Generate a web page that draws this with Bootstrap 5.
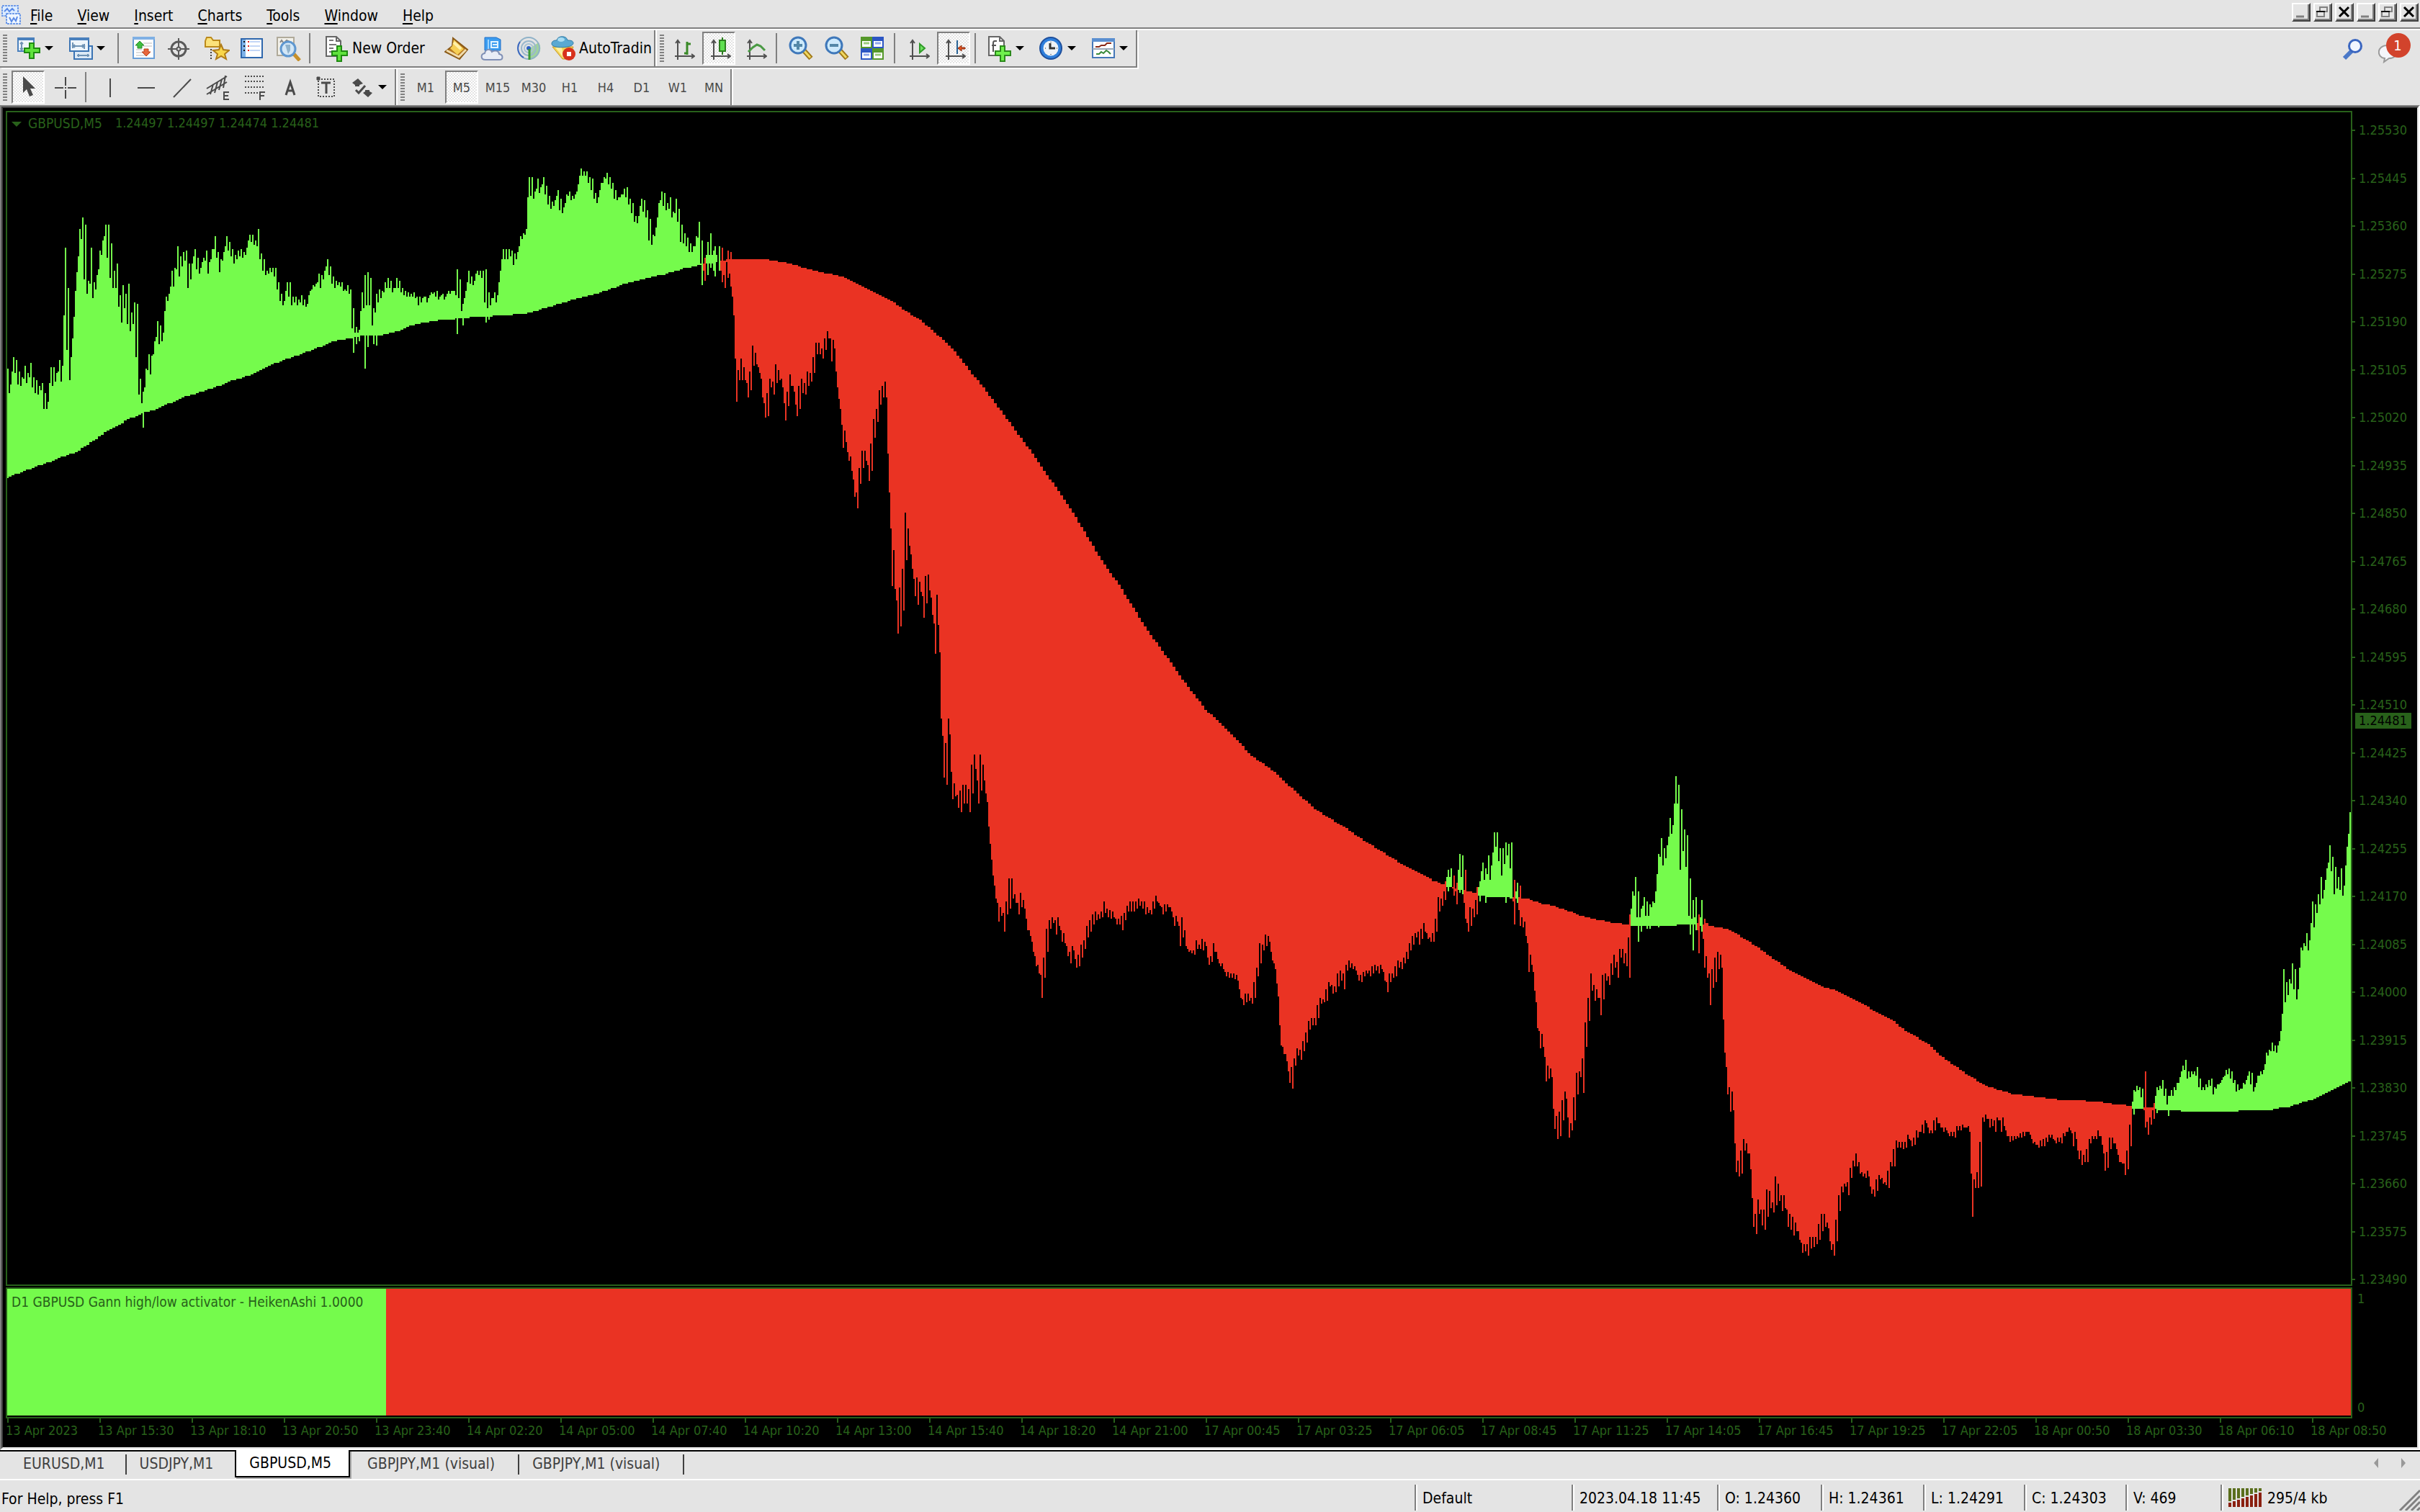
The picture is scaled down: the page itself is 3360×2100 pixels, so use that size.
<!DOCTYPE html>
<html lang="en">
<head>
<meta charset="utf-8">
<meta name="viewport" content="width=device-width, initial-scale=1">
<title>GBPUSD,M5</title>
<link href="https://cdn.jsdelivr.net/npm/bootstrap@5.3.0/dist/css/bootstrap.min.css" rel="stylesheet">
<script src="https://cdn.jsdelivr.net/npm/bootstrap@5.3.0/dist/js/bootstrap.bundle.min.js" defer></script>
<style>
:root{--face:#e4e4e4;--edge:#808080;--axis:#28611a;--up:#75fb4c;--down:#ea3323}
body{background:var(--face);color:#000;font-family:"DejaVu Sans Condensed","DejaVu Sans",Tahoma,sans-serif;font-size:21px;line-height:26px;overflow:hidden}
button{font:inherit;color:inherit;border:0;background:none;padding:0}
svg{display:block;flex:none}
/* menu */
.menubar{height:42px;border-bottom:2px solid #fff;box-shadow:inset 0 -2px 0 var(--edge);padding:0 2px 2px 0}
.menubar nav{gap:34px;padding-left:12px}
.menubar nav a{color:#000;text-decoration:none;line-height:26px;padding-top:6px}
.menubar u{text-decoration-thickness:2px;text-underline-offset:3px}
.winbtn{width:26px;height:26px;border:2px solid;border-color:#fff #404040 #404040 #fff;box-shadow:inset -2px -2px 0 var(--edge)}
/* toolbars */
.toolrow{height:54px}
.toolbox{height:52px;border-right:2px solid var(--edge);border-bottom:2px solid var(--edge);box-shadow:2px 2px 0 #fff;padding-left:4px}
.toolbox2{height:50px;padding-left:4px}
.grip{width:6px;height:38px;margin-right:3px;flex:none;background:repeating-linear-gradient(var(--edge) 0 2px,transparent 2px 4px)}
.toolbox2 .grip{margin-right:6px}
.tool{width:46px;height:46px;margin-right:4px;padding-left:10px;display:flex;align-items:center;flex:none}
.tool.drop{width:72px;margin-right:0}
.tool.drop::after{content:"";margin-left:5px;border:6px solid transparent;border-top-color:#000;border-bottom:0}
.tool.wide{width:164px;padding-left:12px;gap:5px;white-space:nowrap}
.tool.clip{width:151px;margin-right:0;gap:5px;padding-left:8px}
.tool.tf{padding:2px 0 0;justify-content:center;font-size:18px;color:#4a4a4a}
.tool.on{border:2px solid;border-color:var(--edge) #fff #fff var(--edge);padding-left:8px;background:repeating-conic-gradient(#fff 0 25%,#e4e4e4 0 50%) 0 0/4px 4px}
.tool.tf.on{padding:2px 0 0}
.split{width:2px;height:42px;background:var(--edge);margin:0 8px 0 6px;flex:none}
.split.tight{margin:0 6px 0 2px}
.barend{width:4px;align-self:stretch;border-left:2px solid var(--edge);border-right:2px solid #fff;margin-right:4px;flex:none}
.alerts{padding-right:8px;gap:20px}
/* chart window */
.chartwin{min-height:0;border-top:2px solid var(--edge);border-left:2px solid var(--edge);border-right:2px solid #fff;border-bottom:2px solid #fff}
.chartin{border:2px solid;border-color:#404040 #e4e4e4 #e4e4e4 #404040;background:#000;padding:4px 0 0 4px;color:var(--axis);font-size:18px;line-height:18px;display:grid;grid-template-columns:minmax(0,1fr) 90px;grid-template-rows:minmax(0,1fr) 182px 40px}
.plot{border:2px solid var(--axis);margin-bottom:2px;min-height:0}
.plot>svg{width:100%;height:100%;shape-rendering:crispEdges}
.caption1{left:29px;top:6px;gap:18px}
.caption1 span:first-of-type{font-size:19px}
.caption1::before{content:"";position:absolute;left:-23px;top:7px;border:7px solid transparent;border-top-color:var(--axis);border-bottom:0}
.prices{padding-top:18px;margin-bottom:2px}
.prices span{display:flex;align-items:center}
.prices span::before{content:"";width:4px;height:2px;background:var(--axis);margin-right:5px}
.lastprice{left:4px;width:78px;height:22px;line-height:22px;padding-left:5px;background:var(--axis);color:#000;top:51%;margin-top:4px}
.trend{border:2px solid var(--axis);padding-bottom:2px}
.trend .bull{background:var(--up);flex:526}
.trend .bear{background:var(--down);flex:2728}
.trend .caption2{left:6px;top:9px;white-space:nowrap;font-size:19px}
.scale2{padding:7px 0 6px 7px}
.times{grid-column:1/3;padding:0 18px 0 2px}
.times div{flex:1 1 0;min-width:0;white-space:nowrap;line-height:22px}
.times div::before{content:"";display:block;width:2px;height:6px;background:var(--axis)}
.times span{margin-left:-2px}
/* tabs and status */
.tabsbar{height:42px;border-bottom:2px solid #fff;background:linear-gradient(#000 0 2px,transparent 2px);padding-left:14px}
.charttab{height:40px;padding:0 30px 2px 18px;color:#404040;text-decoration:none;position:relative}
.charttab.long{padding-right:34px}
.charttab.bar::after{content:"";position:absolute;right:0;top:6px;width:2px;height:28px;background:#404040}
.charttab.cur{background:#fff;color:#000;height:38px;border:2px solid #000;border-top:0;padding:0 24px 0 18px;box-shadow:2px 2px 0 #a8a8a8;margin-right:6px}
.scrolls{gap:32px;padding-right:20px}
.statusbar{height:44px;padding:6px 0 2px 2px}
.pane{height:36px;border-left:2px solid var(--edge);box-shadow:inset 2px 0 0 #fff;padding:2px 0 0 9px;flex:none}
</style>
</head>
<body>
<div class="vh-100 d-flex flex-column">
  <header class="menubar d-flex align-items-center flex-shrink-0">
    <svg width="30" height="32" viewBox="0 0 30 32"><path d="M3 5h22v14H3z" fill="#dcecff" stroke="#6f9be8" stroke-width="2" stroke-dasharray="3 1"/><path d="M6 13l4-4 3 4 4-4 3 3" fill="none" stroke="#5a8ae6" stroke-width="2"/><path d="M9 16h19v14H9z" fill="#eef6ff" stroke="#6f9be8" stroke-width="2" stroke-dasharray="3 1"/><path d="M13 21l3 6 3-5 3 4 2-6" fill="none" stroke="#5a8ae6" stroke-width="2"/></svg>
    <nav class="d-flex flex-grow-1">
      <a href="#"><u>F</u>ile</a><a href="#"><u>V</u>iew</a><a href="#"><u>I</u>nsert</a><a href="#"><u>C</u>harts</a><a href="#"><u>T</u>ools</a><a href="#"><u>W</u>indow</a><a href="#"><u>H</u>elp</a>
    </nav>
    <div class="d-flex gap-1 pb-1" id="winbtns"></div>
  </header>

  <div class="toolrow d-flex justify-content-between flex-shrink-0">
    <div class="toolbox d-flex align-items-center">
      <span class="grip"></span>
      <button class="tool drop" aria-label="New chart"><svg width="34" height="34" viewBox="0 0 34 34"><path d="M2 3h22v18H2z" fill="#eef5fb" stroke="#4a80bd" stroke-width="2"/><path d="M1 2h24v4H1z" fill="#4a80bd"/><path d="M7 9v10M5 11l2-2 2 2M5 17l2 2 2-2M10 17h3" fill="none" stroke="#6f93b5" stroke-width="2"/><path d="M18 10h6v7h8v6h-8v8h-6v-8h-7v-6h7z" fill="#5fe23c" stroke="#1f8a12" stroke-width="2"/></svg></button>
      <button class="tool drop" aria-label="Profiles"><svg width="34" height="34" viewBox="0 0 34 34"><path d="M8 14h25v18H8z" fill="#dce9f6" stroke="#3b74b4" stroke-width="2"/><path d="M12 27h17M14 25v4M27 25v4" stroke="#6f93b5" stroke-width="2"/><path d="M2 3h26v18H2z" fill="#eef5fb" stroke="#3b74b4" stroke-width="2"/><path d="M1 2h28v4H1z" fill="#4a80bd"/><path d="M6 9v8M6 14h16M22 11v7M9 12l-3 2 3 2M19 12l3 2-3 2" fill="none" stroke="#6f93b5" stroke-width="2"/></svg></button>
      <span class="split"></span>
      <button class="tool" aria-label="Market Watch"><svg width="34" height="34" viewBox="0 0 34 34"><path d="M2 3h29v28H2z" fill="#fff" stroke="#6a9fd8" stroke-width="2"/><path d="M1 1h31v4H1z" fill="#7fb0e4"/><path d="M16 10h12M16 14h12M6 19h8M6 23h9M6 27h12" stroke="#dcdcdc" stroke-width="2"/><path d="M11 7l6 6h-3v4H8v-4H5z" fill="#3fbf3f" stroke="#2c8a2c"/><path d="M20 28l6-6h-3v-4h-6v4h-3z" fill="#e8673c" stroke="#b8441c"/></svg></button>
      <button class="tool" aria-label="Data Window"><svg width="32" height="34" viewBox="0 0 32 34" fill="none" stroke="#5a5a5a" stroke-width="3"><circle cx="15" cy="18" r="10"/><path d="M15 3v30M0 18h30" stroke-width="2"/><circle cx="15" cy="18" r="2.500" fill="#e4e4e4" stroke-width="2"/></svg></button>
      <button class="tool" aria-label="Navigator"><svg width="36" height="34" viewBox="0 0 36 34"><path d="M2 7l2-5h6l3 4h9v9H2z" fill="#fbe27a" stroke="#bb8a1c" stroke-width="2"/><path d="M10 18v14" stroke="#444" stroke-width="2" stroke-dasharray="2 2"/><path d="M24 12l3 7 8 1-6 5 2 7-7-4-7 4 2-7-6-5 8-1z" fill="#f8d64a" stroke="#b07c18" stroke-width="2"/></svg></button>
      <button class="tool" aria-label="Terminal"><svg width="34" height="34" viewBox="0 0 34 34"><path d="M2 4h29v26H2z" fill="#fff" stroke="#2f67ad" stroke-width="2"/><path d="M3 5h5v24H3z" fill="#7fb3ea"/><path d="M14 8h14M14 14h14M14 20h14" stroke="#c3d6f6" stroke-width="2"/><path d="M6 7v16" stroke="#111" stroke-width="2" stroke-dasharray="2 4"/><path d="M12 7v16" stroke="#e02020" stroke-width="2" stroke-dasharray="2 4"/></svg></button>
      <button class="tool" aria-label="Strategy Tester"><svg width="36" height="36" viewBox="0 0 36 36"><path d="M2 3h23v25H2z" fill="#f3f1ea" stroke="#b0aa9a" stroke-width="2"/><path d="M6 10l2-3 3 4 4-4 6 3" fill="none" stroke="#888" stroke-width="2"/><path d="M25 26l8 9" stroke="#c7902a" stroke-width="5"/><circle cx="17" cy="19" r="10" fill="#cfe6f8" fill-opacity=".9" stroke="#5f97d0" stroke-width="3"/><path d="M13 13h7v8l-3 5z" fill="#8fb2cc"/></svg></button>
      <span class="split"></span>
      <button class="tool wide"><svg width="33" height="38" viewBox="0 0 33 38"><path d="M2 3h14l6 6v21H2z" fill="#fdfdfd" stroke="#666" stroke-width="2"/><path d="M16 3v6h6" fill="none" stroke="#666" stroke-width="2"/><path d="M6 8h6M6 14h10M6 19h6M6 24h5" stroke="#777" stroke-width="2"/><path d="M17 16h6v7h8v6h-8v8h-6v-8h-7v-6h7z" fill="#5fe23c" stroke="#1f8a12" stroke-width="2"/></svg>New Order</button>
      <button class="tool" aria-label="MetaEditor"><svg width="34" height="34" viewBox="0 0 34 34"><path d="M12 3l20 16-11 13L1 22l10-8z" fill="#b87a22" stroke="#8a5a18" stroke-width="2"/><path d="M13 5l14 13-9 8L8 17l3-3z" fill="#f6cf55"/><path d="M13 9l10 9" stroke="#fff0a8" stroke-width="4"/><path d="M3 20l17 9 10-10" fill="none" stroke="#f0dcae" stroke-width="3"/></svg></button>
      <button class="tool" aria-label="Virtual Hosting"><svg width="34" height="34" viewBox="0 0 34 34"><path d="M6 2h16l6 3v15H6z" fill="#3b9cf0" stroke="#1f6fc8"/><path d="M11 5v14" stroke="#9cd4ff" stroke-width="2"/><path d="M15 8h9v8h-9z" fill="none" stroke="#dff2ff" stroke-width="2"/><path d="M17 12h6" stroke="#dff2ff" stroke-width="2"/><path d="M7 33c-7 0-7-8-1-9 1-6 8-7 10-2 5-3 10-1 10 3 6 1 6 8 0 8z" fill="#e9edf6" stroke="#7f8fb5" stroke-width="2"/></svg></button>
      <button class="tool" aria-label="Signals"><svg width="34" height="34" viewBox="0 0 34 34" fill="none"><path d="M17 18L31 9a16 16 0 0 1-14 24z" fill="#8fce8a" opacity=".8"/><circle cx="17" cy="17" r="15" stroke="#8fb2c8" stroke-width="2"/><circle cx="17" cy="17" r="10" stroke="#9ab8cc" stroke-width="2"/><circle cx="17" cy="17" r="6" stroke="#a8c2d4" stroke-width="2"/><path d="M10 30A15 15 0 0 1 5 8" stroke="#3d68c0" stroke-width="2"/><circle cx="17" cy="17" r="3" fill="#2d61c4"/><path d="M18 18v15" stroke="#3a9a35" stroke-width="3"/></svg></button>
      <button class="tool wide clip"><svg width="34" height="36" viewBox="0 0 34 36"><path d="M2 16h29l-7 17h-8z" fill="#f2d355" stroke="#c69a25"/><path d="M6 17l12 15-3-15z" fill="#fdf0a0"/><path d="M1 12c0-5 5-5 7-5 1-7 14-7 15 0 3 0 8 0 8 4 0 7-30 8-30 1z" fill="#5aa9d2" stroke="#2f7ba6"/><ellipse cx="14" cy="6" rx="5" ry="3" fill="#a8dcf2"/><circle cx="25" cy="26" r="9" fill="#d8321c"/><path d="M22 23h6v6h-6z" fill="#fff"/></svg>AutoTradin</button>
      <span class="barend"></span><span class="grip"></span>
      <button class="tool" aria-label="Bar chart"><svg width="30" height="34" viewBox="0 0 30 34" fill="none" stroke="#505050" stroke-width="2"><path d="M6 6v27M2 28h27M3 10l3-4 3 4M25 25l4 3-4 3"/><path d="M19 8v18M19 11h5M15 24h4" stroke="#3a8a28" stroke-width="3"/></svg></button>
      <button class="tool on" aria-label="Candlesticks"><svg width="30" height="34" viewBox="0 0 30 34" fill="none" stroke="#505050" stroke-width="2"><path d="M6 6v27M2 28h27M3 10l3-4 3 4M25 25l4 3-4 3"/><path d="M18 2v24" stroke="#2c7f1e"/><path d="M14 6h8v15h-8z" fill="#5fe050" stroke="#2c7f1e"/></svg></button>
      <button class="tool" aria-label="Line chart"><svg width="30" height="34" viewBox="0 0 30 34" fill="none" stroke="#505050" stroke-width="2"><path d="M6 6v27M2 28h27M3 10l3-4 3 4M25 25l4 3-4 3"/><path d="M4 22l6-6 6-4 5 2 6 6" stroke="#4a9a44" stroke-width="3"/></svg></button>
      <span class="split tight"></span>
      <button class="tool" aria-label="Zoom in"><svg width="34" height="34" viewBox="0 0 34 34"><path d="M21 20l10 11" stroke="#a07818" stroke-width="7"/><path d="M21 20l9 10" stroke="#f0d860" stroke-width="3"/><circle cx="13" cy="13" r="11" fill="#cdeafc" stroke="#3f78ba" stroke-width="3"/><path d="M13 7v12M7 13h12" stroke="#5488a8" stroke-width="4"/></svg></button>
      <button class="tool" aria-label="Zoom out"><svg width="34" height="34" viewBox="0 0 34 34"><path d="M21 20l10 11" stroke="#a07818" stroke-width="7"/><path d="M21 20l9 10" stroke="#f0d860" stroke-width="3"/><circle cx="13" cy="13" r="11" fill="#cdeafc" stroke="#3f78ba" stroke-width="3"/><path d="M7 13h12" stroke="#5488a8" stroke-width="4"/></svg></button>
      <button class="tool" aria-label="Tile windows"><svg width="32" height="32" viewBox="0 0 32 32"><path d="M0 0h16v16H0z" fill="#55982a"/><path d="M16 0h16v16H16z" fill="#2c56c4"/><path d="M0 16h16v16H0z" fill="#2c56c4"/><path d="M16 16h16v16H16z" fill="#55982a"/><path d="M2 6h12v8H2zM18 6h12v8H18zM2 22h12v8H2zM18 22h12v8H18z" fill="#fff"/><path d="M4 9h8M20 25h8" stroke="#9ccb7c" stroke-width="3"/><path d="M20 9h8M4 25h8" stroke="#90a8ec" stroke-width="3"/></svg></button>
      <span class="split"></span>
      <button class="tool" aria-label="Auto scroll"><svg width="30" height="34" viewBox="0 0 30 34" fill="none" stroke="#505050" stroke-width="2"><path d="M6 6v27M2 28h27M3 10l3-4 3 4M25 25l4 3-4 3"/><path d="M16 11l7 6-7 6z" fill="#6fe060" stroke="#2f9a28"/></svg></button>
      <button class="tool on" aria-label="Chart shift"><svg width="30" height="34" viewBox="0 0 30 34" fill="none" stroke="#505050" stroke-width="2"><path d="M6 6v27M2 28h27M3 10l3-4 3 4M25 25l4 3-4 3"/><path d="M18 6v19" stroke="#2a6496"/><path d="M19 17l5-4v3h5v2h-5v3z" fill="#e0501c" stroke="#8a2c10" stroke-width="1"/></svg></button>
      <span class="split tight"></span>
      <button class="tool drop" aria-label="Indicators"><svg width="34" height="38" viewBox="0 0 34 38"><path d="M2 3h15l6 6v20H2z" fill="#fdfdfd" stroke="#666" stroke-width="2"/><path d="M17 3v6h6" fill="none" stroke="#666" stroke-width="2"/><path d="M13 9h-3q-2 0-2 3v12M6 15h6" fill="none" stroke="#555" stroke-width="2"/><path d="M18 16h6v7h8v6h-8v8h-6v-8h-7v-6h7z" fill="#6ff04c" stroke="#2c8a1c" stroke-width="2"/></svg></button>
      <button class="tool drop" aria-label="Periods"><svg width="34" height="34" viewBox="0 0 34 34"><circle cx="16" cy="17" r="15" fill="#2f7fdc" stroke="#1f4f9c" stroke-width="2"/><circle cx="16" cy="17" r="10.500" fill="#eef2f6"/><path d="M15 10v7h7" fill="none" stroke="#333" stroke-width="3"/><path d="M16 8v1M16 25v1M8 17h1M24 17h1" stroke="#888" stroke-width="2"/></svg></button>
      <button class="tool drop" aria-label="Templates"><svg width="34" height="34" viewBox="0 0 34 34"><path d="M2 4h30v26H2z" fill="#fff" stroke="#4478b8" stroke-width="2"/><path d="M1 3h32v5H1z" fill="#5a8fd0"/><path d="M2 18h30" stroke="#9aa8b8" stroke-width="2"/><path d="M6 15h5l3-2h5l3-3h6" fill="none" stroke="#8a2a18" stroke-width="2"/><path d="M7 25h4l3-3 3 2 4-4 3 2 3 3" fill="none" stroke="#3a8a3a" stroke-width="2"/></svg></button>
    </div>
    <div class="alerts d-flex align-items-start pt-1">
      <button class="pt-1" aria-label="Search"><svg width="30" height="34" viewBox="0 0 30 34"><path d="M3 31l10-10" stroke="#4a78c8" stroke-width="6"/><circle cx="18" cy="14" r="8.500" fill="#f2f6ff" stroke="#3a66c0" stroke-width="3"/></svg></button>
      <button aria-label="Notifications"><svg width="50" height="42" viewBox="0 0 50 42"><path d="M13 17c-16 0-15 17-4 18l-1 5 7-5c14 0 16-18-2-18z" fill="#f4f5fa" stroke="#9a9a9a" stroke-width="2"/><circle cx="28" cy="17" r="17" fill="#d2432c"/><text x="27" y="24" fill="#fff" font-size="20" text-anchor="middle">1</text></svg></button>
    </div>
  </div>

  <div class="toolbox2 d-flex align-items-center flex-shrink-0">
    <span class="grip"></span>
    <button class="tool on" aria-label="Cursor"><svg width="30" height="34" viewBox="0 0 30 34"><path d="M6 2v23l5-5 4 10 5-2-4-9h7z" fill="#4a4a4a"/></svg></button>
    <button class="tool" aria-label="Crosshair"><svg width="32" height="34" viewBox="0 0 32 34" stroke="#4a4a4a" stroke-width="2"><path d="M15 3v12M15 21v12M0 18h12M18 18h12M14 18h2"/></svg></button>
    <span class="split tight"></span>
    <button class="tool" aria-label="Vertical line"><svg width="32" height="34" viewBox="0 0 32 34"><path d="M17 5v26" stroke="#4a4a4a" stroke-width="2"/></svg></button>
    <button class="tool" aria-label="Horizontal line"><svg width="32" height="34" viewBox="0 0 32 34"><path d="M5 18h24" stroke="#4a4a4a" stroke-width="2"/></svg></button>
    <button class="tool" aria-label="Trendline"><svg width="32" height="34" viewBox="0 0 32 34"><path d="M5 31L29 6" stroke="#4a4a4a" stroke-width="2"/></svg></button>
    <button class="tool" aria-label="Equidistant channel"><svg width="34" height="38" viewBox="0 0 34 38" fill="none" stroke="#4a4a4a" stroke-width="2"><path d="M1 21L29 4M1 29l28-17M6 29l4-14M12 27l4-15M18 23l4-15M24 20l3-17"/><path d="M32 26h-7v10h7M25 31h6"/></svg></button>
    <button class="tool" aria-label="Fibonacci retracement"><svg width="34" height="38" viewBox="0 0 34 38" fill="none" stroke="#4a4a4a" stroke-width="2"><path d="M4 4h26M4 11h26M4 19h26M4 27h18" stroke-dasharray="2 2"/><path d="M32 26h-7v11M25 31h6"/></svg></button>
    <button class="tool" aria-label="Text"><svg width="32" height="34" viewBox="0 0 32 34" fill="none" stroke="#4a4a4a" stroke-width="3"><path d="M11 28l6-18 6 18M13 22h8"/></svg></button>
    <button class="tool" aria-label="Text label"><svg width="32" height="34" viewBox="0 0 32 34" fill="none" stroke="#4a4a4a"><path d="M6 6h22v24H6z" stroke-width="2" stroke-dasharray="2 2"/><path d="M4 3h4v4H4z" fill="#4a4a4a"/><path d="M10 11h13M17 11v15" stroke-width="3"/></svg></button>
    <button class="tool drop" aria-label="Arrows"><svg width="34" height="34" viewBox="0 0 34 34"><path d="M11 5l7 7-5 2v2H7v-2l-4-3zM25 31l-7-6 3-2v-2h6v2l4 2z" fill="#4a4a4a"/><path d="M8 21l4 4 9-10" fill="none" stroke="#4a4a4a" stroke-width="3"/></svg></button>
    <span class="barend"></span><span class="grip"></span>
    <button class="tool tf">M1</button><button class="tool tf on">M5</button><button class="tool tf">M15</button><button class="tool tf">M30</button><button class="tool tf">H1</button><button class="tool tf">H4</button><button class="tool tf">D1</button><button class="tool tf">W1</button><button class="tool tf me-0">MN</button>
    <span class="barend"></span>
  </div>

  <main class="chartwin d-flex flex-column flex-grow-1">
    <div class="chartin flex-grow-1">
      <div class="plot position-relative">
        <svg viewBox="10 156 3254 1628" preserveAspectRatio="none" id="plot"></svg>
        <div class="caption1 position-absolute d-flex"><span>GBPUSD,M5</span><span>1.24497 1.24497 1.24474 1.24481</span></div>
      </div>
      <div class="prices position-relative d-flex flex-column justify-content-between" id="prices"><div class="lastprice position-absolute">1.24481</div></div>
      <div class="trend position-relative d-flex"><div class="bull"></div><div class="bear"></div><div class="caption2 position-absolute">D1 GBPUSD Gann high/low activator - HeikenAshi 1.0000</div></div>
      <div class="scale2 d-flex flex-column justify-content-between"><div>1</div><div>0</div></div>
      <div class="times d-flex" id="times"></div>
    </div>
  </main>

  <div class="tabsbar d-flex align-items-start flex-shrink-0">
    <a class="charttab bar d-flex align-items-center" href="#">EURUSD,M1</a>
    <a class="charttab d-flex align-items-center" href="#">USDJPY,M1</a>
    <a class="charttab cur d-flex align-items-center" href="#">GBPUSD,M5</a>
    <a class="charttab bar long d-flex align-items-center" href="#">GBPJPY,M1 (visual)</a>
    <a class="charttab bar long d-flex align-items-center" href="#">GBPJPY,M1 (visual)</a>
    <div class="scrolls d-flex align-self-center ms-auto pb-1"><svg width="6" height="14" viewBox="0 0 6 14"><path d="M6 0v14L0 7z" fill="#999"/></svg><svg width="6" height="14" viewBox="0 0 6 14"><path d="M0 0v14l6-7z" fill="#999"/></svg></div>
  </div>
  <footer class="statusbar position-relative d-flex align-items-center flex-shrink-0" id="status"><div class="flex-grow-1 pt-1">For Help, press F1</div></footer>
</div>

<script>
const el = (tag, text, cls) => { const n = document.createElement(tag); if (text) n.textContent = text; if (cls) n.className = cls; return n; };

// window controls, once for the program and once for the chart
const glyphs = {
  Minimize: '<path d="M4 17h11" stroke="#808080" stroke-width="3"/>',
  Restore: '<path d="M7 9V4h10v6h-4" fill="none" stroke="#808080" stroke-width="2"/><path d="M3 10h10v7H3z" fill="none" stroke="#808080" stroke-width="2"/><path d="M2 10h12" stroke="#111" stroke-width="2"/>',
  Close: '<path d="M4 4l13 13M17 4L4 17" stroke="#000" stroke-width="3"/>'
};
for (let i = 0; i < 2; i++) for (const k in glyphs) {
  const b = el('button', '', 'winbtn'); b.setAttribute('aria-label', k);
  b.innerHTML = '<svg width="22" height="22" viewBox="0 0 22 22">' + glyphs[k] + '</svg>';
  document.getElementById('winbtns').append(b);
}

// price scale
for (let i = 0; i < 25; i++) document.getElementById('prices').append(el('span', (1.2553 - i * 0.00085).toFixed(5)));

// time scale
'13 Apr 2023,13 Apr 15:30,13 Apr 18:10,13 Apr 20:50,13 Apr 23:40,14 Apr 02:20,14 Apr 05:00,14 Apr 07:40,14 Apr 10:20,14 Apr 13:00,14 Apr 15:40,14 Apr 18:20,14 Apr 21:00,17 Apr 00:45,17 Apr 03:25,17 Apr 06:05,17 Apr 08:45,17 Apr 11:25,17 Apr 14:05,17 Apr 16:45,17 Apr 19:25,17 Apr 22:05,18 Apr 00:50,18 Apr 03:30,18 Apr 06:10,18 Apr 08:50'
  .split(',').forEach(t => { const d = el('div'); d.append(el('span', t)); document.getElementById('times').append(d); });

// status panes
[['Default',218],['2023.04.18 11:45',202],['O: 1.24360',144],['H: 1.24361',142],['L: 1.24291',140],['C: 1.24303',141],['V: 469',132],['295/4 kb',277]].forEach(([t, w], i) => {
  const p = el('div', i < 7 ? t : '', 'pane d-flex align-items-center'); p.style.width = w + 'px';
  if (i === 7) {
    let s = '<svg class="me-2" width="46" height="28" viewBox="0 0 46 28">';
    for (let k = 0; k < 8; k++) { const h = 6 + 2 * k; s += `<path d="M${k * 6} 0h4v${24 - h}h-4z" fill="#5a6e1c"/><path d="M${k * 6} ${26 - h}h4v${h}h-4z" fill="#8a2010"/>`; }
    p.innerHTML = s + '</svg>' + t + '<svg class="ms-auto align-self-end" width="30" height="30" viewBox="0 0 30 30" stroke="#808080" stroke-width="3"><path d="M2 30L30 2M10 30L30 10M18 30L30 18M26 30l4-4"/></svg>';
  }
  document.getElementById('status').append(p);
});

// history frames: origin and scale of each recorded stretch
const A = [0, 220, 1.452, 3], B = [960, 320, 1.96, 1.4], C = [1700, 1000, 1.96, 1.96], D = [2440, 1080, 1.823, 2.24];
const pts = (f, s) => s.trim().split(/\s+/).map(p => { const [x, y] = p.split(',').map(Number); return [f[0] + x / f[2], f[1] + y / f[3]]; });
const even = v => Math.round(v / 2) * 2;
function at(list, x, exact) {
  let i = 1; while (i < list.length - 1 && list[i][0] < x) i++;
  const [a, b] = [list[i - 1], list[i]];
  if (exact) { if (Math.abs(a[0] - x) < 1.1) return a[1]; if (Math.abs(b[0] - x) < 1.1) return b[1]; }
  const t = Math.min(1, Math.max(0, (x - a[0]) / (b[0] - a[0])));
  return a[1] + (b[1] - a[1]) * t;
}
const paths = { up: '', down: '' };
const bar = (k, x, y1, y2) => { y1 = even(y1); y2 = even(y2); paths[k] += `M${x} ${y1}h2V${y2}h-2z`; };
function fill(k, x0, x1, ma, px) {
  for (let x = even(x0); x < x1; x += 2) {
    const m = at(ma, Math.floor(x / 4) * 4 + 2), p = at(px, x + 1, true);
    bar(k, x, Math.min(m, p), Math.max(m, p));
  }
}
const ticks = (k, f, s) => s.trim().split(/\s+/).forEach(p => { const [x, a, b] = p.split(',').map(Number); bar(k, even(f[0] + x / f[2] - 1), f[1] + a / f[3], f[1] + b / f[3]); });

fill('up', 10, 976, pts(A, '15,1330 45,1305 75,1283 105,1262 135,1236 155,1224 165,1206 185,1182 205,1152 225,1124 245,1103 265,1082 290,1060 315,1045 345,1018 375,992 410,971 445,945 475,921 505,903 535,870 570,842 605,817 640,790 665,768 690,755 712,750 715,742 765,737 800,722 820,702 850,686 880,676 920,668 960,660 990,658 1000,654 1030,652 1060,645 1080,636 1100,622 1130,605 1170,580 1215,556 1260,522 1300,500 1340,483 1380,458 1415,444'),
pts(A, `15,876 18,980 21,940 24,888 27,830 30,892 33,840 36,940 39,888 42,946 45,912 48,920 51,865 54,935 57,893 60,910 63,852 66,952 68,912 71,976 74,924 77,982 80,948 82,965 85,936 88,1044 91,978 94,1044 97,1012 100,936 103,870 106,946 109,870 112,930 115,894 118,888 121,840 124,930 126,862 129,655 132,372 135,798 137,540 140,922 143,828 146,750 149,660 152,552 155,474 158,408 161,295 164,335 167,246 169,502 172,276 175,562 178,510 182,520 184,372 187,580 190,516 193,545 195,486 198,460 201,384 204,402 207,342 210,324 213,276 216,412 219,276 221,500 224,354 227,540 230,468 233,540 236,438 239,618 242,570 245,684 248,528 251,622 254,564 257,690 259,522 262,718 265,640 268,690 271,600 274,828 277,606 280,982 283,918 286,1020 289,972 291,954 294,876 297,880 300,816 303,900 306,822 309,816 312,762 315,744 318,678 321,774 324,696 326,762 329,726 332,636 335,576 338,594 341,564 344,534 347,468 350,534 352,456 355,462 358,366 361,492 364,408 367,450 370,390 373,426 376,384 379,540 382,438 385,504 388,436 393,378 396,462 399,414 402,480 405,456 410,414 413,426 416,384 419,480 422,432 425,420 428,378 431,378 434,324 437,416 439,390 442,474 445,420 448,425 452,390 454,366 457,324 460,384 463,348 465,408 468,378 471,438 474,402 477,420 480,384 483,408 486,378 489,414 492,390 495,402 498,372 500,342 503,318 506,348 509,318 512,360 515,342 518,366 521,295 524,420 527,396 530,468 532,420 535,486 538,468 541,480 544,456 547,474 550,456 553,492 556,456 559,546 562,516 565,594 568,564 571,612 573,594 576,552 579,516 582,576 585,516 588,612 591,576 594,600 597,576 600,612 602,588 605,600 608,570 611,612 614,588 617,618 620,606 622,570 625,552 628,546 631,528 634,534 637,522 640,516 643,480 646,540 649,486 652,504 655,468 658,450 660,420 663,486 666,450 669,522 672,492 675,540 678,510 681,528 684,516 687,534 690,516 693,552 696,546 699,552 702,528 705,564 708,546 710,708 712,625 715,725 718,702 721,726 724,714 727,636 730,558 733,624 737,486 739,612 741,474 744,612 747,498 750,695 753,625 756,642 760,564 762,600 765,546 768,582 771,552 774,558 777,516 780,540 782,498 785,540 788,510 791,558 794,540 797,540 799,498 802,540 805,510 808,558 811,540 814,570 817,552 820,576 823,558 826,576 829,564 832,576 835,558 838,582 841,576 844,612 846,576 849,600 852,582 858,576 861,600 864,582 870,558 873,564 876,558 879,576 881,552 884,588 887,576 893,564 896,588 899,576 904,552 907,564 910,552 915,552 917,534 919,570 921,462 924,582 928,504 931,635 934,606 937,580 940,552 943,516 945,468 948,522 951,492 954,528 957,510 960,480 963,468 966,486 969,468 971,498 974,468 977,600 980,462 983,624 986,558 989,612 992,582 995,582 998,558 1001,600 1004,570 1006,516 1008,468 1011,420 1014,378 1017,420 1020,378 1023,420 1026,378 1029,408 1032,384 1035,444 1038,396 1041,420 1044,390 1047,366 1049,324 1052,336 1055,312 1058,318 1061,295 1064,160 1067,78 1070,156 1072,78 1075,168 1078,138 1081,126 1084,84 1087,144 1090,120 1093,108 1096,78 1099,150 1102,114 1105,192 1108,156 1110,210 1113,180 1116,198 1119,174 1122,156 1125,132 1128,216 1131,168 1133,228 1136,204 1139,186 1142,150 1145,156 1148,138 1151,174 1154,156 1157,168 1160,150 1163,138 1166,108 1168,72 1171,42 1174,72 1177,54 1180,72 1183,54 1186,102 1188,78 1191,132 1194,84 1197,168 1200,144 1203,186 1206,162 1209,132 1212,102 1215,102 1218,78 1220,84 1223,60 1226,108 1229,78 1232,126 1235,102 1238,168 1241,132 1244,174 1247,162 1250,162 1253,150 1256,150 1259,126 1262,162 1264,120 1267,192 1270,168 1273,228 1276,186 1279,264 1282,240 1285,270 1288,240 1290,198 1293,168 1296,222 1299,174 1302,246 1305,216 1308,342 1310,252 1313,360 1316,318 1319,324 1322,288 1325,246 1328,186 1331,174 1334,138 1337,198 1340,144 1343,216 1346,186 1349,210 1351,162 1354,246 1357,222 1360,228 1363,168 1366,264 1369,210 1372,348 1374,276 1377,354 1380,312 1383,366 1386,330 1389,390 1392,354 1395,390 1398,366 1401,366 1403,324 1406,330 1409,264 1412,438 1415,342 1417,438`));
ticks('up', A, '289,1040,1122 712,740,810 718,740,775 724,740,762 737,730,876 741,730,786 753,730,774 759,730,780 921,660,732 933,655,696 980,650,684 986,650,672 1415,342,528 1424,402,440 1427,348,486 1430,402,438 1433,312,456 1435,400,438 1438,384,468 1441,405,432 1443,366,492 1446,402,432 1450,366,468');
ticks('down', A, '1418,440,468 1421,414,510 1453,428,468 1456,372,516 1459,428,486 1462,428,540 1465,420,432 1467,384,498 1470,420,480 1473,390,534');

fill('down', 1015, 1760, pts(B, '108,56 200,56 235,60 270,64 310,74 345,80 385,86 420,92 460,106 500,121 545,136 580,155 630,178 665,200 695,218 720,238 760,275 800,310 840,348 880,387 920,425 960,467 1000,507 1040,550 1080,598 1120,645 1160,685 1200,730 1240,777 1280,815 1320,856 1360,895 1400,932 1440,958 1480,987 1520,1018 1545,1033 1568,1042'),
pts(B, `108,107 112,130 115,165 119,250 123,333 127,272 131,290 135,250 139,290 143,266 147,290 151,298 155,325 159,275 163,310 167,224 170,262 174,238 180,260 190,288 195,325 198,335 202,364 206,316 210,360 214,287 218,305 221,294 225,318 229,260 233,296 237,272 241,290 245,288 249,305 253,335 257,370 261,314 265,342 269,280 273,303 277,302 280,314 284,338 288,360 292,302 296,347 300,287 304,316 308,297 312,318 316,275 320,302 323,277 327,293 331,247 335,277 339,218 343,240 347,218 351,240 355,230 359,250 363,210 366,232 370,196 374,210 378,210 382,254 386,213 390,230 394,275 398,305 402,328 406,347 410,378 414,422 418,390 422,412 426,430 430,447 434,440 438,468 442,484 445,517 449,510 453,540 457,462 461,492 465,428 468,462 472,428 476,448 480,456 484,487 488,414 492,468 496,367 500,402 504,347 508,371 512,310 516,338 520,302 523,325 528,294 532,325 535,434 540,510 543,580 547,692 551,622 555,697 559,720 563,784 566,694 570,770 574,658 578,740 582,550 586,640 590,580 594,613 598,630 602,658 606,678 610,710 613,675 617,728 621,683 625,703 629,710 633,752 637,672 641,725 645,670 649,700 653,714 657,748 661,765 664,823 668,708 672,767 676,820 680,948 684,982 688,1064 692,997 696,1078 700,950 704,980 708,1052 712,1106 716,1075 720,1100 724,1098 727,1123 731,1090 735,1131 739,1078 743,1114 747,1078 751,1114 755,1086 759,1131 762,1040 766,1095 770,1019 774,1047 778,1070 782,1114 786,1020 790,1088 794,1040 798,1070 802,1095 806,1112 810,1160 814,1193 818,1224 822,1254 826,1274 830,1300 834,1308 837,1344 841,1316 845,1333 849,1328 853,1364 857,1305 860,1330 864,1260 868,1319 872,1260 876,1299 880,1291 884,1308 888,1308 892,1330 896,1288 900,1315 904,1302 908,1319 912,1338 916,1360 920,1361 924,1372 928,1383 932,1403 936,1411 939,1431 943,1428 947,1445 951,1448 955,1492 958,1414 962,1453 966,1358 970,1403 974,1341 978,1358 982,1336 986,1347 990,1341 994,1369 998,1336 1002,1352 1006,1361 1009,1383 1013,1366 1017,1386 1021,1392 1025,1411 1029,1403 1033,1425 1037,1392 1041,1400 1045,1417 1049,1434 1053,1408 1056,1431 1060,1389 1064,1414 1068,1380 1072,1397 1076,1352 1080,1375 1084,1341 1088,1364 1092,1330 1096,1350 1100,1324 1104,1341 1108,1330 1111,1338 1115,1324 1119,1336 1123,1305 1127,1327 1131,1319 1135,1336 1139,1322 1143,1338 1147,1324 1151,1336 1155,1338 1158,1350 1162,1338 1166,1350 1170,1333 1174,1361 1178,1327 1182,1341 1186,1313 1190,1324 1194,1305 1198,1324 1202,1305 1206,1324 1209,1305 1213,1319 1217,1299 1221,1313 1225,1305 1229,1319 1233,1305 1237,1330 1241,1316 1245,1327 1249,1322 1252,1330 1256,1305 1260,1319 1264,1294 1268,1305 1272,1308 1276,1313 1280,1316 1284,1330 1288,1310 1292,1324 1296,1310 1300,1315 1304,1316 1307,1325 1311,1336 1315,1352 1319,1333 1323,1344 1327,1352 1331,1392 1335,1336 1339,1375 1343,1361 1347,1392 1351,1397 1354,1403 1358,1400 1362,1406 1366,1400 1370,1408 1374,1380 1378,1397 1382,1389 1386,1397 1390,1378 1394,1400 1398,1383 1402,1392 1405,1414 1409,1428 1413,1411 1417,1422 1421,1386 1425,1403 1429,1403 1433,1417 1437,1425 1441,1431 1445,1425 1449,1436 1456,1450 1460,1442 1464,1453 1468,1445 1472,1453 1476,1445 1480,1456 1484,1448 1488,1459 1492,1476 1496,1492 1499,1495 1502,1506 1507,1484 1511,1501 1515,1484 1519,1498 1523,1492 1527,1504 1531,1462 1535,1492 1539,1434 1542,1450 1546,1386 1550,1425 1554,1389 1558,1400 1562,1369 1566,1392`));

fill('down', 1760, 2008, pts(C, '117,128 150,152 180,182 215,214 250,244 290,270 330,293 375,325 420,353 460,377 490,397 530,417 570,438 590,446 604,448'),
pts(C, `112,585 116,614 120,588 124,603 128,631 132,655 136,662 140,678 143,717 147,753 151,831 155,886 159,890 163,909 167,909 171,929 174,956 178,988 182,945 186,1003 190,921 194,941 198,894 202,913 206,898 210,925 214,874 218,902 221,851 225,878 229,819 233,843 237,811 241,831 245,811 249,831 253,776 257,811 261,757 265,771 268,760 272,768 276,733 280,764 284,713 288,725 292,721 296,745 300,725 304,741 308,690 312,725 316,682 320,710 323,690 327,733 331,666 335,682 339,655 343,674 347,662 351,678 355,670 359,682 363,694 367,710 370,694 374,713 378,686 382,698 386,682 390,690 394,682 398,698 402,670 406,690 410,666 414,682 418,670 421,690 425,666 429,678 433,686 437,710 441,713 445,741 449,690 453,713 457,690 461,702 464,670 468,698 472,655 476,674 480,659 484,678 488,647 492,662 496,631 500,651 504,608 508,627 512,588 515,612 519,580 523,592 527,576 531,612 535,568 539,596 543,553 547,576 551,580 555,596 559,592 562,603 566,580 570,603 574,541 578,576 582,482 586,521 590,486 594,506 598,466 602,490`));
ticks('up', C, '606,427,455 610,408,466 614,427,455 617,404,455 637,408,463 641,365,469 645,427,463 649,368,474 794,466,486 798,443,498 1296,537,560 1300,490,576');
ticks('down', C, '602,439,490 621,455,459 625,423,478 629,457,466 633,443,502 653,463,497 657,408,541 688,455,529 786,482,494 790,435,557 802,482,517 806,451,561 1103,529,702 1288,553,572 1292,529,635 1303,557,596 1307,541,674 1311,553,643 1315,553,702');
fill('down', 2036, 2052, pts(C, '659,465 670,467 690,471'), pts(C, '660,553 664,576 668,510 672,561 676,514 680,537 684,490 688,529'));
fill('up', 2052, 2100, pts(C, '690,478 711,478 713,482 760,482 785,486'), pts(C, '692,455 696,439 700,412 704,388 708,435 712,404 716,420 719,368 723,435 727,396 731,361 735,306 739,345 743,306 747,384 751,349 755,423 759,349 762,392 766,333 770,368 774,337 778,404 782,333'));
ticks('up', C, '696,470,494 711,470,498 766,470,498 1127,550,604 1135,550,576 1151,550,568 1158,550,568 1180,550,564 1268,550,584 1276,550,627 1284,550,572');
fill('down', 2112, 2262, pts(C, '808,486 830,487 840,493 870,501 895,505 920,514 945,522 960,529 985,537 1020,544 1060,552 1103,557'),
pts(C, `810,537 814,564 817,549 821,588 825,608 829,686 833,639 837,666 841,686 845,737 849,768 853,839 857,847 860,894 864,855 868,890 872,917 876,984 880,941 884,976 888,949 892,972 896,1058 900,1113 904,1078 908,1141 911,1066 915,1133 919,1035 923,1090 927,1011 931,1031 935,1082 939,1137 943,1098 947,1117 951,1027 955,1090 958,960 962,1019 966,956 970,972 974,921 978,1015 982,823 986,890 990,757 994,819 998,690 1002,737 1006,721 1009,764 1013,733 1017,757 1021,757 1025,804 1029,694 1033,760 1037,690 1041,710 1045,698 1049,721 1053,662 1056,694 1060,639 1064,674 1068,659 1072,702 1076,623 1080,647 1084,623 1088,662 1092,635 1096,670 1100,592 1103,702`));
fill('up', 2264, 2356, pts(C, '1105,561 1230,560 1232,556 1290,556'),
pts(C, `1107,514 1111,466 1115,478 1119,427 1123,537 1127,466 1131,537 1135,514 1139,506 1143,482 1147,533 1151,494 1155,533 1158,502 1162,510 1166,494 1170,498 1174,466 1178,420 1182,365 1186,372 1190,321 1194,396 1198,349 1202,376 1206,341 1209,318 1213,267 1217,310 1221,286 1225,227 1229,153 1233,227 1237,176 1241,408 1245,243 1249,357 1252,298 1256,400 1260,314 1264,533 1268,431 1272,541 1276,490 1280,537 1284,482`));
fill('down', 2370, 2500, pts(C, '1309,556 1320,561 1345,564 1370,569 1390,580 1420,598 1450,618 1480,640 1510,660 1540,682 1568,694'),
pts(C, `1311,643 1315,702 1319,690 1323,776 1327,678 1331,729 1335,647 1339,713 1343,631 1347,678 1350,639 1354,674 1358,815 1362,906 1366,945 1370,1019 1374,1000 1378,1066 1382,1011 1386,1062 1390,1152 1394,1231 1398,1200 1401,1243 1405,1172 1409,1235 1413,1141 1417,1172 1421,1152 1425,1180 1429,1180 1433,1223 1437,1301 1441,1380 1445,1345 1448,1399 1452,1305 1456,1345 1460,1333 1464,1376 1468,1333 1472,1388 1476,1278 1480,1352 1484,1282 1488,1329 1492,1313 1496,1341 1499,1243 1503,1321 1507,1262 1511,1309 1515,1294 1519,1337 1523,1294 1527,1329 1531,1333 1535,1380 1539,1345 1543,1388 1546,1352 1550,1403 1554,1368 1558,1392 1562,1392 1566,1415`));
fill('down', 2500, 2960, pts(D, '109,617 130,630 165,650 205,665 240,688 270,706 300,728 340,753 370,782 400,805 430,826 460,862 490,888 520,914 550,938 580,960 610,971 650,985 700,992 750,1001 820,1005 870,1009 905,1016 947,1021'),
pts(D, `107,1438 111,1447 114,1478 118,1452 122,1474 125,1452 129,1487 133,1429 137,1465 140,1429 144,1460 147,1429 151,1452 155,1389 158,1438 162,1357 166,1411 169,1357 173,1398 177,1384 180,1402 184,1442 188,1469 191,1452 195,1487 199,1375 202,1442 206,1299 210,1348 213,1272 217,1290 220,1263 224,1272 228,1259 231,1299 235,1214 239,1245 242,1192 246,1210 250,1169 253,1210 257,1196 261,1232 264,1228 268,1241 272,1232 275,1245 279,1223 283,1241 286,1272 290,1295 293,1281 297,1304 301,1250 304,1286 308,1237 312,1250 315,1245 319,1263 323,1259 326,1268 330,1223 334,1277 337,1196 341,1210 344,1156 348,1210 352,1129 355,1151 359,1133 363,1151 366,1133 370,1156 374,1133 377,1151 381,1111 385,1124 388,1129 392,1147 395,1120 399,1142 403,1098 406,1120 410,1102 413,1102 417,1080 421,1107 425,1066 428,1075 432,1089 436,1107 439,1098 443,1107 446,1066 450,1098 454,1057 458,1075 461,1075 465,1089 468,1089 472,1102 476,1089 480,1098 483,1107 487,1116 491,1102 494,1116 498,1102 502,1120 505,1084 509,1098 512,1084 516,1098 520,1080 523,1089 527,1089 530,1089 534,1084 538,1102 541,1232 545,1366 549,1250 552,1277 556,1228 560,1277 563,1133 567,1272 571,1057 574,1071 578,1048 582,1062 585,1062 589,1089 593,1062 596,1084 600,1066 604,1102 607,1057 611,1066 614,1066 618,1102 622,1057 626,1084 629,1098 633,1116 636,1116 640,1133 644,1116 647,1129 651,1116 655,1124 658,1116 662,1120 666,1107 669,1120 673,1102 677,1116 680,1102 684,1102 687,1102 691,1111 695,1124 698,1138 702,1133 706,1142 709,1142 713,1151 717,1129 720,1147 724,1124 728,1147 731,1120 735,1133 739,1111 742,1120 746,1111 749,1124 753,1129 757,1138 760,1120 764,1133 768,1120 771,1138 775,1107 779,1116 782,1102 786,1102 790,1089 793,1098 797,1107 801,1147 805,1102 808,1124 811,1160 815,1187 819,1160 822,1205 826,1174 830,1196 833,1156 837,1196 841,1124 844,1138 848,1116 852,1124 855,1116 859,1124 863,1098 866,1116 870,1116 873,1142 877,1169 881,1223 884,1165 888,1214 892,1120 895,1156 899,1120 903,1138 906,1138 910,1156 913,1174 917,1196 921,1196 924,1201 928,1201 932,1237 936,1160 939,1219 943,1080 946,1147`));
fill('up', 2960, 2976, pts(D, '948,1030 977,1030'), pts(D, '950,1008 953,972 957,977 961,959 964,972 968,963 971,995 975,968'));
fill('down', 2976, 2992, pts(D, '977,1026 1005,1026'), pts(D, '979,1035 983,1089 986,1071 990,1111 993,1057 997,1080 1001,1035 1005,1062'));
fill('up', 2992, 3264, pts(D, '1007,1030 1015,1034 1070,1036 1075,1039 1215,1039 1225,1035 1300,1034 1320,1028 1345,1025 1370,1014 1405,1001 1440,979 1470,962 1503,945'),
pts(D, `1008,990 1012,963 1015,972 1019,959 1023,968 1026,941 1030,990 1034,968 1037,1017 1041,990 1045,990 1049,972 1052,990 1056,963 1060,972 1063,950 1067,950 1070,932 1074,914 1077,896 1081,910 1085,878 1089,937 1092,914 1096,932 1100,914 1103,923 1107,914 1110,928 1114,901 1118,963 1121,937 1125,972 1128,963 1132,972 1136,954 1140,963 1143,941 1147,959 1150,937 1154,986 1158,963 1161,968 1165,954 1169,954 1172,950 1176,941 1180,932 1183,928 1187,910 1190,923 1194,905 1198,937 1201,914 1205,950 1209,941 1212,977 1216,954 1220,972 1223,968 1227,968 1231,950 1234,954 1238,941 1241,928 1245,914 1249,954 1252,919 1256,977 1260,963 1263,950 1267,928 1271,928 1274,914 1278,923 1282,910 1285,892 1289,856 1293,865 1296,847 1300,852 1303,825 1307,852 1311,834 1314,856 1318,834 1322,820 1326,788 1329,735 1333,596 1336,699 1340,636 1344,677 1347,627 1351,640 1355,578 1358,659 1362,596 1366,690 1369,659 1373,590 1376,529 1380,538 1384,515 1387,524 1391,484 1395,538 1398,506 1402,452 1406,385 1409,466 1413,394 1416,421 1420,363 1424,394 1427,309 1431,376 1435,349 1438,318 1442,282 1446,264 1449,211 1453,291 1457,246 1460,363 1464,278 1468,345 1471,309 1475,349 1478,282 1482,367 1486,336 1489,273 1493,215 1497,175 1500,108 1503,108`));
ticks('up', D, '953,1020,1048 1011,1020,1044 1041,1020,1053');
ticks('down', D, '983,914,1089 1005,1012,1062');
document.getElementById('plot').innerHTML = `<path d="${paths.down}" fill="#ea3323"/><path d="${paths.up}" fill="#75fb4c"/>`;
</script>
</body>
</html>
